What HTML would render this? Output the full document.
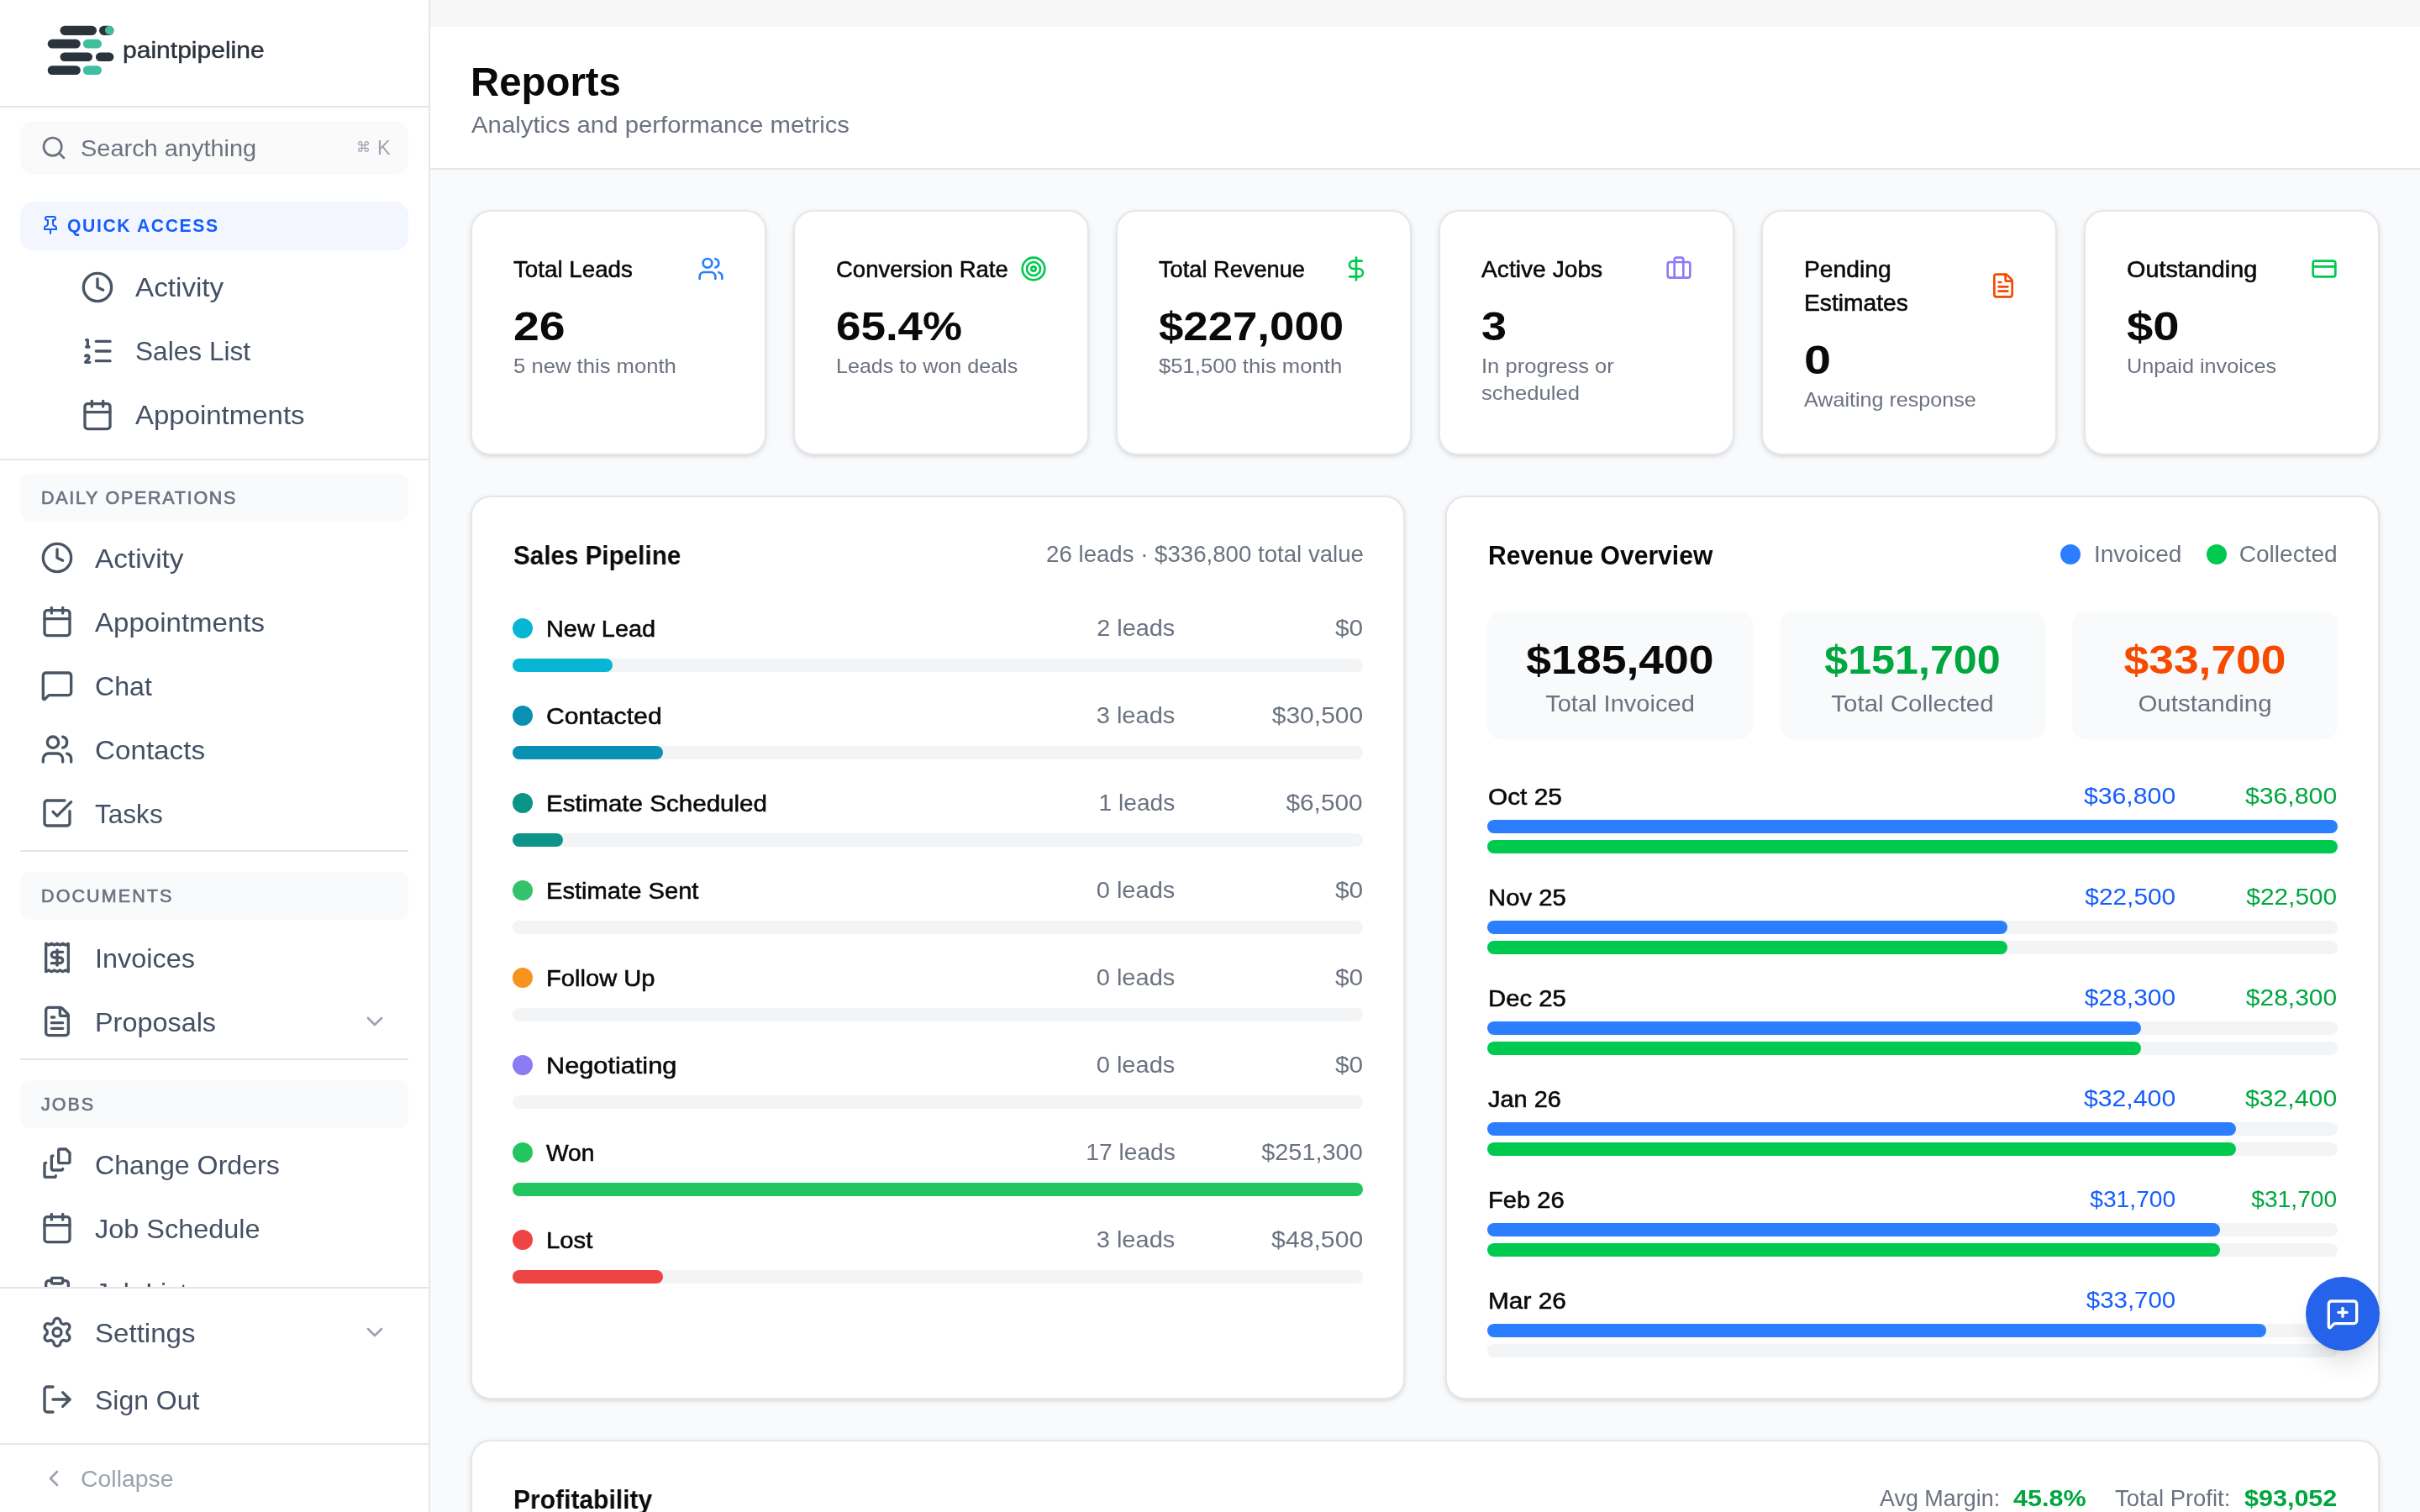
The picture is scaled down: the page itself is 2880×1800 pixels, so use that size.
<!DOCTYPE html>
<html lang="en"><head><meta charset="utf-8"><title>Reports - paintpipeline</title>
<style>
*{box-sizing:border-box;margin:0;padding:0}
html,body{width:2880px;height:1800px;overflow:hidden;background:#f9fafb}
body{font-family:"Liberation Sans",Arial,sans-serif;color:#0a0a0a;position:relative}
.abs{position:absolute}
@media (max-width:2000px){html{zoom:.5}}
#side{will-change:transform;position:absolute;left:0;top:0;width:512px;height:1800px;background:#fff;border-right:2px solid #e4e6e9;overflow:hidden}
.hr{position:absolute;height:2px;background:#e4e6e9}
.nav{color:#445064}
.sec{position:absolute;left:24px;width:462px;height:57px;border-radius:12px;background:#f9fafb}
#main{will-change:transform;position:absolute;left:512px;top:0;width:2368px;height:1800px;overflow:hidden}
.card{position:absolute;background:#fff;border:2px solid #e4e6e9;border-radius:24px;box-shadow:0 2px 6px rgba(0,0,0,.1),0 2px 4px -2px rgba(0,0,0,.1)}
.t{position:absolute;white-space:nowrap}
.med{-webkit-text-stroke:.55px currentColor}
.semi{-webkit-text-stroke:.25px currentColor}
.bar{position:absolute;height:16px;border-radius:8px;background:#f3f4f6}
.fill{position:absolute;left:0;top:0;height:16px;border-radius:8px}
.dot{position:absolute;width:24px;height:24px;border-radius:50%}
.g5{color:#6b7280}
</style></head><body>

<div id="side">
<svg class="abs" style="left:56px;top:30px" width="80" height="60" viewBox="56 30 80 60"><g fill="#2b333d"><rect x="71.5" y="30.7" width="43.5" height="11.3" rx="5.65"/><rect x="118" y="30.7" width="17.5" height="11.3" rx="5.65"/><rect x="56.7" y="46.8" width="39.1" height="10.8" rx="5.4"/><rect x="71.5" y="62.5" width="38.5" height="10.6" rx="5.3"/><rect x="113.9" y="62.5" width="21.5" height="10.6" rx="5.3"/><rect x="56.7" y="78.2" width="39.1" height="10.8" rx="5.4"/></g><g fill="#3fbf9f"><circle cx="130.2" cy="36" r="5.2"/><rect x="98.8" y="46.8" width="22.2" height="10.8" rx="5.4"/><rect x="98.8" y="78.2" width="22.2" height="10.8" rx="5.4"/></g></svg>
<div class="t " style="top:40.12px;line-height:40px;font-size:27.5px;transform:scaleX(1.0925);transform-origin:left center;left:146px;color:#2b333d;-webkit-text-stroke:.45px #2b333d;">paintpipeline</div>
<div class="hr" style="left:0;top:126px;width:510px"></div>
<div class="abs" style="left:24px;top:144px;width:462px;height:64px;border-radius:16px;background:#fafafa"></div>
<svg style="position:absolute;left:48px;top:160px;" width="32" height="32" viewBox="0 0 24 24" fill="none" stroke="#6b7280" stroke-width="2" stroke-linecap="round" stroke-linejoin="round"><circle cx="11" cy="11" r="8"/><path d="m21 21-4.3-4.3"/></svg>
<div class="t " style="top:152.82px;line-height:48px;font-size:28px;transform:scaleX(1.0336);transform-origin:left center;left:96px;color:#6b7280;">Search anything</div>
<div class="t" style="left:423px;top:155.5px;line-height:40px;font-size:23.5px;color:#9ca3af;letter-spacing:0"><span style="font-family:'DejaVu Sans',sans-serif;font-size:17px;position:relative;top:-2.5px;margin-right:8px;margin-left:1px">&#8984;</span>K</div>
<div class="abs" style="left:24px;top:240px;width:462px;height:58px;border-radius:16px;background:#f3f6fe"></div>
<svg style="position:absolute;left:48px;top:256px;" width="24" height="24" viewBox="0 0 24 24" fill="none" stroke="#155dfc" stroke-width="2" stroke-linecap="round" stroke-linejoin="round"><line x1="12" x2="12" y1="17" y2="22"/><path d="M5 17h14v-1.76a2 2 0 0 0-1.11-1.79l-1.78-.9A2 2 0 0 1 15 10.76V6h1a2 2 0 0 0 0-4H8a2 2 0 0 0 0 4h1v4.76a2 2 0 0 1-1.11 1.79l-1.78.9A2 2 0 0 0 5 15.24Z"/></svg>
<div class="t " style="top:239.76px;line-height:58px;font-size:22.5px;letter-spacing:1.71px;transform:scaleX(0.94);transform-origin:left center;left:80px;font-weight:700;color:#155dfc;">QUICK ACCESS</div>
<svg style="position:absolute;left:96px;top:322px;" width="40" height="40" viewBox="0 0 24 24" fill="none" stroke="#4a5565" stroke-width="2" stroke-linecap="round" stroke-linejoin="round"><circle cx="12" cy="12" r="10"/><polyline points="12 6 12 12 16 14"/></svg>
<div class="t nav" style="top:304.47px;line-height:76px;font-size:32px;transform:scaleX(1.0381);transform-origin:left center;left:161px;">Activity</div>
<svg style="position:absolute;left:96px;top:398px;" width="40" height="40" viewBox="0 0 24 24" fill="none" stroke="#4a5565" stroke-width="2" stroke-linecap="round" stroke-linejoin="round"><path d="M11 5h10"/><path d="M11 12h10"/><path d="M11 19h10"/><path d="M4 4h1v5"/><path d="M4 9h2"/><path d="M6.5 20H3.4c0-1 2.6-1.925 2.6-3.5a1.5 1.5 0 0 0-2.6-1.02"/></svg>
<div class="t nav" style="top:380.47px;line-height:76px;font-size:32px;transform:scaleX(0.9881);transform-origin:left center;left:161px;">Sales List</div>
<svg style="position:absolute;left:96px;top:474px;" width="40" height="40" viewBox="0 0 24 24" fill="none" stroke="#4a5565" stroke-width="2" stroke-linecap="round" stroke-linejoin="round"><path d="M8 2v4"/><path d="M16 2v4"/><rect width="18" height="18" x="3" y="4" rx="2"/><path d="M3 10h18"/></svg>
<div class="t nav" style="top:456.47px;line-height:76px;font-size:32px;transform:scaleX(1.0299);transform-origin:left center;left:161px;">Appointments</div>
<div class="hr" style="left:0;top:546px;width:510px"></div>
<div class="sec" style="top:564px"></div>
<div class="t " style="top:564.75px;line-height:57px;font-size:21.5px;letter-spacing:1.73px;transform:scaleX(1.0);transform-origin:left center;left:49px;color:#6b7280;-webkit-text-stroke:.65px #6b7280;">DAILY OPERATIONS</div>
<svg style="position:absolute;left:48px;top:644px;" width="40" height="40" viewBox="0 0 24 24" fill="none" stroke="#4a5565" stroke-width="2" stroke-linecap="round" stroke-linejoin="round"><circle cx="12" cy="12" r="10"/><polyline points="12 6 12 12 16 14"/></svg>
<div class="t nav" style="top:626.87px;line-height:76px;font-size:32px;transform:scaleX(1.041);transform-origin:left center;left:113px;">Activity</div>
<svg style="position:absolute;left:48px;top:720px;" width="40" height="40" viewBox="0 0 24 24" fill="none" stroke="#4a5565" stroke-width="2" stroke-linecap="round" stroke-linejoin="round"><path d="M8 2v4"/><path d="M16 2v4"/><rect width="18" height="18" x="3" y="4" rx="2"/><path d="M3 10h18"/></svg>
<div class="t nav" style="top:702.87px;line-height:76px;font-size:32px;transform:scaleX(1.0325);transform-origin:left center;left:113px;">Appointments</div>
<svg style="position:absolute;left:48px;top:796px;" width="40" height="40" viewBox="0 0 24 24" fill="none" stroke="#4a5565" stroke-width="2" stroke-linecap="round" stroke-linejoin="round"><path d="M22 17a2 2 0 0 1-2 2H6.828a2 2 0 0 0-1.414.586l-2.202 2.202A.71.71 0 0 1 2 21.286V5a2 2 0 0 1 2-2h16a2 2 0 0 1 2 2z"/></svg>
<div class="t nav" style="top:778.87px;line-height:76px;font-size:32px;transform:scaleX(1.0045);transform-origin:left center;left:113px;">Chat</div>
<svg style="position:absolute;left:48px;top:872px;" width="40" height="40" viewBox="0 0 24 24" fill="none" stroke="#4a5565" stroke-width="2" stroke-linecap="round" stroke-linejoin="round"><path d="M16 21v-2a4 4 0 0 0-4-4H6a4 4 0 0 0-4 4v2"/><circle cx="9" cy="7" r="4"/><path d="M22 21v-2a4 4 0 0 0-3-3.87"/><path d="M16 3.13a4 4 0 0 1 0 7.75"/></svg>
<div class="t nav" style="top:854.87px;line-height:76px;font-size:32px;transform:scaleX(1.0372);transform-origin:left center;left:113px;">Contacts</div>
<svg style="position:absolute;left:48px;top:948px;" width="40" height="40" viewBox="0 0 24 24" fill="none" stroke="#4a5565" stroke-width="2" stroke-linecap="round" stroke-linejoin="round"><path d="M21 10.656V19a2 2 0 0 1-2 2H5a2 2 0 0 1-2-2V5a2 2 0 0 1 2-2h12.344"/><path d="m9 11 3 3L22 4"/></svg>
<div class="t nav" style="top:930.87px;line-height:76px;font-size:32px;transform:scaleX(0.9864);transform-origin:left center;left:113px;">Tasks</div>
<div class="hr" style="left:24px;top:1012px;width:462px"></div>
<div class="sec" style="top:1038px"></div>
<div class="t " style="top:1038.75px;line-height:57px;font-size:21.5px;letter-spacing:2.1px;transform:scaleX(1.0);transform-origin:left center;left:49px;color:#6b7280;-webkit-text-stroke:.65px #6b7280;">DOCUMENTS</div>
<svg style="position:absolute;left:48px;top:1120px;" width="40" height="40" viewBox="0 0 24 24" fill="none" stroke="#4a5565" stroke-width="2" stroke-linecap="round" stroke-linejoin="round"><path d="M4 2v20l2-1 2 1 2-1 2 1 2-1 2 1 2-1 2 1V2l-2 1-2-1-2 1-2-1-2 1-2-1-2 1Z"/><path d="M16 8h-6a2 2 0 1 0 0 4h4a2 2 0 1 1 0 4H8"/><path d="M12 17.5v-11"/></svg>
<div class="t nav" style="top:1102.87px;line-height:76px;font-size:32px;transform:scaleX(1.0141);transform-origin:left center;left:113px;">Invoices</div>
<svg style="position:absolute;left:48px;top:1196px;" width="40" height="40" viewBox="0 0 24 24" fill="none" stroke="#4a5565" stroke-width="2" stroke-linecap="round" stroke-linejoin="round"><path d="M6 22a2 2 0 0 1-2-2V4a2 2 0 0 1 2-2h8a2.4 2.4 0 0 1 1.704.706l3.588 3.588A2.4 2.4 0 0 1 20 8v12a2 2 0 0 1-2 2z"/><path d="M14 2v5a1 1 0 0 0 1 1h5"/><path d="M10 9H8"/><path d="M16 13H8"/><path d="M16 17H8"/></svg>
<div class="t nav" style="top:1178.87px;line-height:76px;font-size:32px;transform:scaleX(1.0122);transform-origin:left center;left:113px;">Proposals</div>
<svg style="position:absolute;left:430px;top:1200px;" width="32" height="32" viewBox="0 0 24 24" fill="none" stroke="#9ca3af" stroke-width="2" stroke-linecap="round" stroke-linejoin="round"><path d="m6 9 6 6 6-6"/></svg>
<div class="hr" style="left:24px;top:1260px;width:462px"></div>
<div class="sec" style="top:1286px"></div>
<div class="t " style="top:1286.75px;line-height:57px;font-size:21.5px;letter-spacing:2.0px;transform:scaleX(1.0);transform-origin:left center;left:49px;color:#6b7280;-webkit-text-stroke:.65px #6b7280;">JOBS</div>
<svg style="position:absolute;left:48px;top:1366px;" width="40" height="40" viewBox="0 0 24 24" fill="none" stroke="#4a5565" stroke-width="2" stroke-linecap="round" stroke-linejoin="round"><path d="M14 1.2h4.3L21 3.900V10.200a1 1 0 0 1-1 1h-6a1 1 0 0 1-1-1v-8a1 1 0 0 1 1-1z"/><path d="M9 6a1 1 0 0 0-1 1v8.200a1 1 0 0 0 1 1h6a1 1 0 0 0 1-1"/><path d="M4 11a1 1 0 0 0-1 1v8.200a1 1 0 0 0 1 1h6a1 1 0 0 0 1-1"/></svg>
<div class="t nav" style="top:1348.87px;line-height:76px;font-size:32px;transform:scaleX(1.0052);transform-origin:left center;left:113px;">Change Orders</div>
<svg style="position:absolute;left:48px;top:1442px;" width="40" height="40" viewBox="0 0 24 24" fill="none" stroke="#4a5565" stroke-width="2" stroke-linecap="round" stroke-linejoin="round"><path d="M8 2v4"/><path d="M16 2v4"/><rect width="18" height="18" x="3" y="4" rx="2"/><path d="M3 10h18"/></svg>
<div class="t nav" style="top:1424.87px;line-height:76px;font-size:32px;transform:scaleX(1.0133);transform-origin:left center;left:113px;">Job Schedule</div>
<svg style="position:absolute;left:48px;top:1518px;" width="40" height="40" viewBox="0 0 24 24" fill="none" stroke="#4a5565" stroke-width="2" stroke-linecap="round" stroke-linejoin="round"><rect width="8" height="4" x="8" y="2" rx="1" ry="1"/><path d="M16 4h2a2 2 0 0 1 2 2v14a2 2 0 0 1-2 2H6a2 2 0 0 1-2-2V6a2 2 0 0 1 2-2h2"/><path d="M12 11h4"/><path d="M12 16h4"/><path d="M8 11h.01"/><path d="M8 16h.01"/></svg>
<div class="t nav" style="top:1500.87px;line-height:76px;font-size:32px;transform:scaleX(0.9965);transform-origin:left center;left:113px;">Job List</div>
<div class="abs" style="left:0;top:1532px;width:510px;height:268px;background:#fff;border-top:2px solid #e4e6e9"></div>
<svg style="position:absolute;left:48px;top:1566px;" width="40" height="40" viewBox="0 0 24 24" fill="none" stroke="#4a5565" stroke-width="2" stroke-linecap="round" stroke-linejoin="round"><path d="M9.671 4.136a2.34 2.34 0 0 1 4.659 0 2.34 2.34 0 0 0 3.319 1.915 2.34 2.34 0 0 1 2.33 4.033 2.34 2.34 0 0 0 0 3.831 2.34 2.34 0 0 1-2.33 4.033 2.34 2.34 0 0 0-3.319 1.915 2.34 2.34 0 0 1-4.659 0 2.34 2.34 0 0 0-3.32-1.915 2.34 2.34 0 0 1-2.33-4.033 2.34 2.34 0 0 0 0-3.831A2.34 2.34 0 0 1 6.35 6.051a2.34 2.34 0 0 0 3.319-1.915"/><circle cx="12" cy="12" r="3"/></svg>
<div class="t nav" style="top:1548.87px;line-height:76px;font-size:32px;transform:scaleX(1.0341);transform-origin:left center;left:113px;">Settings</div>
<svg style="position:absolute;left:430px;top:1570px;" width="32" height="32" viewBox="0 0 24 24" fill="none" stroke="#9ca3af" stroke-width="2" stroke-linecap="round" stroke-linejoin="round"><path d="m6 9 6 6 6-6"/></svg>
<svg style="position:absolute;left:48px;top:1646px;" width="40" height="40" viewBox="0 0 24 24" fill="none" stroke="#4a5565" stroke-width="2" stroke-linecap="round" stroke-linejoin="round"><path d="M9 21H5a2 2 0 0 1-2-2V5a2 2 0 0 1 2-2h4"/><polyline points="16 17 21 12 16 7"/><line x1="21" x2="9" y1="12" y2="12"/></svg>
<div class="t nav" style="top:1628.87px;line-height:76px;font-size:32px;transform:scaleX(0.999);transform-origin:left center;left:113px;">Sign Out</div>
<div class="hr" style="left:0;top:1718px;width:510px"></div>
<svg style="position:absolute;left:48px;top:1744px;" width="32" height="32" viewBox="0 0 24 24" fill="none" stroke="#9ca3af" stroke-width="2" stroke-linecap="round" stroke-linejoin="round"><path d="m15 18-6-6 6-6"/></svg>
<div class="t " style="top:1736.82px;line-height:48px;font-size:28px;transform:scaleX(1.0151);transform-origin:left center;left:96px;color:#9ca3af;">Collapse</div>
</div>
<div id="main">
<div class="abs" style="left:0;top:0;width:2368px;height:32px;background:#f7f7f8"></div>
<div class="abs" style="left:0;top:32px;width:2368px;height:170px;background:#fff;border-bottom:2px solid #e4e6e9"></div>
<div class="t " style="top:66.05px;line-height:64px;font-size:48px;transform:scaleX(0.9866);transform-origin:left center;left:48.3px;font-weight:700;">Reports</div>
<div class="t g5" style="top:129.22px;line-height:40px;font-size:28px;transform:scaleX(1.0478);transform-origin:left center;left:48.8px;">Analytics and performance metrics</div>
<div class="card" style="left:48px;top:250px;width:352px;height:292px">
<div class="t med" style="left:49.3px;top:48.82px;line-height:40px;font-size:28px;"><span style="display:block;width:max-content;transform:scaleX(0.9908);transform-origin:left center">Total Leads</span></div>
<svg style="position:absolute;left:268px;top:52.0px;" width="32" height="32" viewBox="0 0 24 24" fill="none" stroke="#2b7fff" stroke-width="2" stroke-linecap="round" stroke-linejoin="round"><path d="M16 21v-2a4 4 0 0 0-4-4H6a4 4 0 0 0-4 4v2"/><circle cx="9" cy="7" r="4"/><path d="M22 21v-2a4 4 0 0 0-3-3.87"/><path d="M16 3.13a4 4 0 0 1 0 7.75"/></svg>
<div class="t " style="top:105.05px;line-height:64px;font-size:48px;transform:scaleX(1.154);transform-origin:left center;left:48.6px;font-weight:700;">26</div>
<div class="t g5" style="left:49px;top:167.78px;line-height:32px;font-size:24px;"><span style="display:block;width:max-content;transform:scaleX(1.0684);transform-origin:left center">5 new this month</span></div>
</div>
<div class="card" style="left:432px;top:250px;width:352px;height:292px">
<div class="t med" style="left:49.3px;top:48.82px;line-height:40px;font-size:28px;"><span style="display:block;width:max-content;transform:scaleX(0.9817);transform-origin:left center">Conversion Rate</span></div>
<svg style="position:absolute;left:268px;top:52.0px;" width="32" height="32" viewBox="0 0 24 24" fill="none" stroke="#00c950" stroke-width="2" stroke-linecap="round" stroke-linejoin="round"><circle cx="12" cy="12" r="10"/><circle cx="12" cy="12" r="6"/><circle cx="12" cy="12" r="2"/></svg>
<div class="t " style="top:105.05px;line-height:64px;font-size:48px;transform:scaleX(1.1032);transform-origin:left center;left:48.6px;font-weight:700;">65.4%</div>
<div class="t g5" style="left:49px;top:167.78px;line-height:32px;font-size:24px;"><span style="display:block;width:max-content;transform:scaleX(1.0456);transform-origin:left center">Leads to won deals</span></div>
</div>
<div class="card" style="left:816px;top:250px;width:352px;height:292px">
<div class="t med" style="left:49.3px;top:48.82px;line-height:40px;font-size:28px;"><span style="display:block;width:max-content;transform:scaleX(0.9718);transform-origin:left center">Total Revenue</span></div>
<svg style="position:absolute;left:268px;top:52.0px;" width="32" height="32" viewBox="0 0 24 24" fill="none" stroke="#00c950" stroke-width="2" stroke-linecap="round" stroke-linejoin="round"><line x1="12" x2="12" y1="2" y2="22"/><path d="M17 5H9.5a3.5 3.5 0 0 0 0 7h5a3.5 3.5 0 0 1 0 7H6"/></svg>
<div class="t " style="top:105.05px;line-height:64px;font-size:48px;transform:scaleX(1.0992);transform-origin:left center;left:48.6px;font-weight:700;">$227,000</div>
<div class="t g5" style="left:49px;top:167.78px;line-height:32px;font-size:24px;"><span style="display:block;width:max-content;transform:scaleX(1.0686);transform-origin:left center">$51,500 this month</span></div>
</div>
<div class="card" style="left:1200px;top:250px;width:352px;height:292px">
<div class="t med" style="left:49.3px;top:48.82px;line-height:40px;font-size:28px;"><span style="display:block;width:max-content;transform:scaleX(1.0072);transform-origin:left center">Active Jobs</span></div>
<svg style="position:absolute;left:268px;top:52.0px;" width="32" height="32" viewBox="0 0 24 24" fill="none" stroke="#8e7bf7" stroke-width="2" stroke-linecap="round" stroke-linejoin="round"><path d="M16 20V4a2 2 0 0 0-2-2h-4a2 2 0 0 0-2 2v16"/><rect width="20" height="14" x="2" y="6" rx="2"/></svg>
<div class="t " style="top:105.05px;line-height:64px;font-size:48px;transform:scaleX(1.125);transform-origin:left center;left:48.6px;font-weight:700;">3</div>
<div class="t g5" style="left:49px;top:167.78px;line-height:32px;font-size:24px;"><span style="display:block;width:max-content;transform:scaleX(1.0659);transform-origin:left center">In progress or</span> <span style="display:block;width:max-content;transform:scaleX(1.0687);transform-origin:left center">scheduled</span></div>
</div>
<div class="card" style="left:1584px;top:250px;width:352px;height:292px">
<div class="t med" style="left:49.3px;top:48.82px;line-height:40px;font-size:28px;"><span style="display:block;width:max-content;transform:scaleX(1.0092);transform-origin:left center">Pending</span> <span style="display:block;width:max-content;transform:scaleX(1.0081);transform-origin:left center">Estimates</span></div>
<svg style="position:absolute;left:269.5px;top:72.0px;" width="32" height="32" viewBox="0 0 24 24" fill="none" stroke="#f54a00" stroke-width="2" stroke-linecap="round" stroke-linejoin="round"><path d="M6 22a2 2 0 0 1-2-2V4a2 2 0 0 1 2-2h8a2.4 2.4 0 0 1 1.704.706l3.588 3.588A2.4 2.4 0 0 1 20 8v12a2 2 0 0 1-2 2z"/><path d="M14 2v5a1 1 0 0 0 1 1h5"/><path d="M10 9H8"/><path d="M16 13H8"/><path d="M16 17H8"/></svg>
<div class="t " style="top:145.05px;line-height:64px;font-size:48px;transform:scaleX(1.2);transform-origin:left center;left:48.6px;font-weight:700;">0</div>
<div class="t g5" style="left:49px;top:207.78px;line-height:32px;font-size:24px;"><span style="display:block;width:max-content;transform:scaleX(1.0459);transform-origin:left center">Awaiting response</span></div>
</div>
<div class="card" style="left:1968px;top:250px;width:352px;height:292px">
<div class="t med" style="left:49.3px;top:48.82px;line-height:40px;font-size:28px;"><span style="display:block;width:max-content;transform:scaleX(1.0282);transform-origin:left center">Outstanding</span></div>
<svg style="position:absolute;left:268px;top:52.0px;" width="32" height="32" viewBox="0 0 24 24" fill="none" stroke="#00c950" stroke-width="2" stroke-linecap="round" stroke-linejoin="round"><rect width="20" height="14" x="2" y="5" rx="2"/><line x1="2" x2="22" y1="10" y2="10"/></svg>
<div class="t " style="top:105.05px;line-height:64px;font-size:48px;transform:scaleX(1.1703);transform-origin:left center;left:48.6px;font-weight:700;">$0</div>
<div class="t g5" style="left:49px;top:167.78px;line-height:32px;font-size:24px;"><span style="display:block;width:max-content;transform:scaleX(1.0509);transform-origin:left center">Unpaid invoices</span></div>
</div>
<div class="card" style="left:48px;top:590px;width:1112px;height:1076px">
<div class="t " style="top:48.87px;line-height:40px;font-size:32px;transform:scaleX(0.9257);transform-origin:left center;left:48.5px;font-weight:700;">Sales Pipeline</div>
<div class="t g5" style="top:48.42px;line-height:40px;font-size:28px;transform:scaleX(0.9867);transform-origin:right center;right:47.5px;">26 leads &middot; $336,800 total value</div>
<div class="dot" style="left:48px;top:144px;background:#06b6d4"></div>
<div class="t med" style="top:136.82px;line-height:40px;font-size:28px;transform:scaleX(1.0318);transform-origin:left center;left:88.4px;">New Lead</div>
<div class="t g5" style="top:136.42px;line-height:40px;font-size:28px;transform:scaleX(1.0307);transform-origin:right center;right:271.3px;">2 leads</div>
<div class="t g5" style="top:136.42px;line-height:40px;font-size:28px;transform:scaleX(1.0663);transform-origin:right center;right:48px;">$0</div>
<div class="bar" style="left:48px;top:192px;width:1012px"><div class="fill" style="width:119.1px;background:#06b6d4"></div></div>
<div class="dot" style="left:48px;top:248px;background:#0891b2"></div>
<div class="t med" style="top:240.82px;line-height:40px;font-size:28px;transform:scaleX(1.0786);transform-origin:left center;left:88.4px;">Contacted</div>
<div class="t g5" style="top:240.42px;line-height:40px;font-size:28px;transform:scaleX(1.0364);transform-origin:right center;right:271.3px;">3 leads</div>
<div class="t g5" style="top:240.42px;line-height:40px;font-size:28px;transform:scaleX(1.0721);transform-origin:right center;right:48px;">$30,500</div>
<div class="bar" style="left:48px;top:296px;width:1012px"><div class="fill" style="width:178.6px;background:#0891b2"></div></div>
<div class="dot" style="left:48px;top:352px;background:#0d9488"></div>
<div class="t med" style="top:344.82px;line-height:40px;font-size:28px;transform:scaleX(1.056);transform-origin:left center;left:88.4px;">Estimate Scheduled</div>
<div class="t g5" style="top:344.42px;line-height:40px;font-size:28px;transform:scaleX(1.0047);transform-origin:right center;right:271.3px;">1 leads</div>
<div class="t g5" style="top:344.42px;line-height:40px;font-size:28px;transform:scaleX(1.065);transform-origin:right center;right:48px;">$6,500</div>
<div class="bar" style="left:48px;top:400px;width:1012px"><div class="fill" style="width:59.5px;background:#0d9488"></div></div>
<div class="dot" style="left:48px;top:456px;background:#34c26a"></div>
<div class="t med" style="top:448.82px;line-height:40px;font-size:28px;transform:scaleX(1.041);transform-origin:left center;left:88.4px;">Estimate Sent</div>
<div class="t g5" style="top:448.42px;line-height:40px;font-size:28px;transform:scaleX(1.0364);transform-origin:right center;right:271.3px;">0 leads</div>
<div class="t g5" style="top:448.42px;line-height:40px;font-size:28px;transform:scaleX(1.0663);transform-origin:right center;right:48px;">$0</div>
<div class="bar" style="left:48px;top:504px;width:1012px"></div>
<div class="dot" style="left:48px;top:560px;background:#f7931e"></div>
<div class="t med" style="top:552.82px;line-height:40px;font-size:28px;transform:scaleX(1.0409);transform-origin:left center;left:88.4px;">Follow Up</div>
<div class="t g5" style="top:552.42px;line-height:40px;font-size:28px;transform:scaleX(1.0364);transform-origin:right center;right:271.3px;">0 leads</div>
<div class="t g5" style="top:552.42px;line-height:40px;font-size:28px;transform:scaleX(1.0663);transform-origin:right center;right:48px;">$0</div>
<div class="bar" style="left:48px;top:608px;width:1012px"></div>
<div class="dot" style="left:48px;top:664px;background:#8b7cf6"></div>
<div class="t med" style="top:656.82px;line-height:40px;font-size:28px;transform:scaleX(1.0964);transform-origin:left center;left:88.4px;">Negotiating</div>
<div class="t g5" style="top:656.42px;line-height:40px;font-size:28px;transform:scaleX(1.0364);transform-origin:right center;right:271.3px;">0 leads</div>
<div class="t g5" style="top:656.42px;line-height:40px;font-size:28px;transform:scaleX(1.0663);transform-origin:right center;right:48px;">$0</div>
<div class="bar" style="left:48px;top:712px;width:1012px"></div>
<div class="dot" style="left:48px;top:768px;background:#22c55e"></div>
<div class="t med" style="top:760.82px;line-height:40px;font-size:28px;transform:scaleX(1.0073);transform-origin:left center;left:88.4px;">Won</div>
<div class="t g5" style="top:760.42px;line-height:40px;font-size:28px;transform:scaleX(1.0062);transform-origin:right center;right:271.3px;">17 leads</div>
<div class="t g5" style="top:760.42px;line-height:40px;font-size:28px;transform:scaleX(1.0326);transform-origin:right center;right:48px;">$251,300</div>
<div class="bar" style="left:48px;top:816px;width:1012px"><div class="fill" style="width:1012.0px;background:#22c55e"></div></div>
<div class="dot" style="left:48px;top:872px;background:#ef4444"></div>
<div class="t med" style="top:864.82px;line-height:40px;font-size:28px;transform:scaleX(1.0441);transform-origin:left center;left:88.4px;">Lost</div>
<div class="t g5" style="top:864.42px;line-height:40px;font-size:28px;transform:scaleX(1.0364);transform-origin:right center;right:271.3px;">3 leads</div>
<div class="t g5" style="top:864.42px;line-height:40px;font-size:28px;transform:scaleX(1.0781);transform-origin:right center;right:48px;">$48,500</div>
<div class="bar" style="left:48px;top:920px;width:1012px"><div class="fill" style="width:178.6px;background:#ef4444"></div></div>
</div>
<div class="card" style="left:1208px;top:590px;width:1112px;height:1076px">
<div class="t " style="top:48.87px;line-height:40px;font-size:32px;transform:scaleX(0.9391);transform-origin:left center;left:48.5px;font-weight:700;">Revenue Overview</div>
<div class="dot" style="left:730px;top:56px;background:#2b7fff"></div>
<div class="t g5" style="top:48.42px;line-height:40px;font-size:28px;transform:scaleX(0.9998);transform-origin:left center;left:770px;">Invoiced</div>
<div class="dot" style="left:904px;top:56px;background:#00c950"></div>
<div class="t g5" style="top:48.42px;line-height:40px;font-size:28px;transform:scaleX(1.003);transform-origin:right center;right:48px;">Collected</div>
<div class="abs" style="left:48px;top:136px;width:316px;height:152px;border-radius:16px;background:#f9fafb;text-align:center"><div style="margin-top:26px;line-height:64px;font-size:48px;font-weight:700;color:#0a0a0a;transform:scaleX(1.1153)">$185,400</div><div class="g5" style="line-height:40px;font-size:28px;transform:scaleX(1.0375)">Total Invoiced</div></div>
<div class="abs" style="left:396px;top:136px;width:316px;height:152px;border-radius:16px;background:#f9fafb;text-align:center"><div style="margin-top:26px;line-height:64px;font-size:48px;font-weight:700;color:#00a63e;transform:scaleX(1.0463)">$151,700</div><div class="g5" style="line-height:40px;font-size:28px;transform:scaleX(1.0523)">Total Collected</div></div>
<div class="abs" style="left:744px;top:136px;width:316px;height:152px;border-radius:16px;background:#f9fafb;text-align:center"><div style="margin-top:26px;line-height:64px;font-size:48px;font-weight:700;color:#f54a00;transform:scaleX(1.1123)">$33,700</div><div class="g5" style="line-height:40px;font-size:28px;transform:scaleX(1.0544)">Outstanding</div></div>
<div class="t med" style="top:336.72px;line-height:40px;font-size:28px;transform:scaleX(1.0654);transform-origin:left center;left:48.8px;">Oct 25</div>
<div class="t " style="top:336.42px;line-height:40px;font-size:28px;transform:scaleX(1.0801);transform-origin:right center;right:240.5px;color:#155dfc;">$36,800</div>
<div class="t " style="top:336.42px;line-height:40px;font-size:28px;transform:scaleX(1.0801);transform-origin:right center;right:48.5px;color:#00a63e;">$36,800</div>
<div class="bar" style="left:48px;top:384px;width:1012px"><div class="fill" style="width:1012.0px;background:#2b7fff"></div></div>
<div class="bar" style="left:48px;top:408px;width:1012px"><div class="fill" style="width:1012.0px;background:#00c950"></div></div>
<div class="t med" style="top:456.72px;line-height:40px;font-size:28px;transform:scaleX(1.0459);transform-origin:left center;left:48.8px;">Nov 25</div>
<div class="t " style="top:456.42px;line-height:40px;font-size:28px;transform:scaleX(1.0662);transform-origin:right center;right:240.5px;color:#155dfc;">$22,500</div>
<div class="t " style="top:456.42px;line-height:40px;font-size:28px;transform:scaleX(1.0662);transform-origin:right center;right:48.5px;color:#00a63e;">$22,500</div>
<div class="bar" style="left:48px;top:504px;width:1012px"><div class="fill" style="width:618.8px;background:#2b7fff"></div></div>
<div class="bar" style="left:48px;top:528px;width:1012px"><div class="fill" style="width:618.8px;background:#00c950"></div></div>
<div class="t med" style="top:576.72px;line-height:40px;font-size:28px;transform:scaleX(1.0459);transform-origin:left center;left:48.8px;">Dec 25</div>
<div class="t " style="top:576.42px;line-height:40px;font-size:28px;transform:scaleX(1.0711);transform-origin:right center;right:240.5px;color:#155dfc;">$28,300</div>
<div class="t " style="top:576.42px;line-height:40px;font-size:28px;transform:scaleX(1.0711);transform-origin:right center;right:48.5px;color:#00a63e;">$28,300</div>
<div class="bar" style="left:48px;top:624px;width:1012px"><div class="fill" style="width:778.2px;background:#2b7fff"></div></div>
<div class="bar" style="left:48px;top:648px;width:1012px"><div class="fill" style="width:778.2px;background:#00c950"></div></div>
<div class="t med" style="top:696.72px;line-height:40px;font-size:28px;transform:scaleX(1.0324);transform-origin:left center;left:48.8px;">Jan 26</div>
<div class="t " style="top:696.42px;line-height:40px;font-size:28px;transform:scaleX(1.0801);transform-origin:right center;right:240.5px;color:#155dfc;">$32,400</div>
<div class="t " style="top:696.42px;line-height:40px;font-size:28px;transform:scaleX(1.0801);transform-origin:right center;right:48.5px;color:#00a63e;">$32,400</div>
<div class="bar" style="left:48px;top:744px;width:1012px"><div class="fill" style="width:891.0px;background:#2b7fff"></div></div>
<div class="bar" style="left:48px;top:768px;width:1012px"><div class="fill" style="width:891.0px;background:#00c950"></div></div>
<div class="t med" style="top:816.72px;line-height:40px;font-size:28px;transform:scaleX(1.0414);transform-origin:left center;left:48.8px;">Feb 26</div>
<div class="t " style="top:816.42px;line-height:40px;font-size:28px;transform:scaleX(1.0075);transform-origin:right center;right:240.5px;color:#155dfc;">$31,700</div>
<div class="t " style="top:816.42px;line-height:40px;font-size:28px;transform:scaleX(1.0075);transform-origin:right center;right:48.5px;color:#00a63e;">$31,700</div>
<div class="bar" style="left:48px;top:864px;width:1012px"><div class="fill" style="width:871.8px;background:#2b7fff"></div></div>
<div class="bar" style="left:48px;top:888px;width:1012px"><div class="fill" style="width:871.8px;background:#00c950"></div></div>
<div class="t med" style="top:936.72px;line-height:40px;font-size:28px;transform:scaleX(1.0654);transform-origin:left center;left:48.8px;">Mar 26</div>
<div class="t " style="top:936.42px;line-height:40px;font-size:28px;transform:scaleX(1.0513);transform-origin:right center;right:240.5px;color:#155dfc;">$33,700</div>
<div class="bar" style="left:48px;top:984px;width:1012px"><div class="fill" style="width:926.8px;background:#2b7fff"></div></div>
<div class="bar" style="left:48px;top:1008px;width:1012px"></div>
</div>
<div class="card" style="left:48px;top:1714px;width:2272px;height:400px">
<div class="t " style="top:48.87px;line-height:40px;font-size:32px;transform:scaleX(0.9385);transform-origin:left center;left:48.5px;font-weight:700;">Profitability</div>
<div class="t g5" style="top:48.42px;line-height:40px;font-size:28px;transform:scaleX(0.9612);transform-origin:left center;left:1675px;">Avg Margin:</div>
<div class="t " style="top:48.42px;line-height:40px;font-size:28px;transform:scaleX(1.0919);transform-origin:left center;left:1834px;font-weight:700;color:#00a63e;">45.8%</div>
<div class="t g5" style="top:48.42px;line-height:40px;font-size:28px;transform:scaleX(0.9807);transform-origin:left center;left:1955px;">Total Profit:</div>
<div class="t " style="top:48.42px;line-height:40px;font-size:28px;transform:scaleX(1.09);transform-origin:left center;left:2108.5px;font-weight:700;color:#00a63e;">$93,052</div>
</div>
<div class="abs" style="left:2232px;top:1520px;width:88px;height:88px;border-radius:50%;background:#2563eb;box-shadow:0 20px 30px -6px rgba(0,0,0,.12),0 8px 12px -8px rgba(0,0,0,.12)"><svg style="position:absolute;left:24px;top:24px;" width="40" height="40" viewBox="0 0 24 24" fill="none" stroke="#fff" stroke-width="2" stroke-linecap="round" stroke-linejoin="round"><path d="M22 17a2 2 0 0 1-2 2H6.828a2 2 0 0 0-1.414.586l-2.202 2.202A.71.71 0 0 1 2 21.286V5a2 2 0 0 1 2-2h16a2 2 0 0 1 2 2z"/><path d="M12 8v6"/><path d="M9 11h6"/></svg></div>
</div>
</body></html>
